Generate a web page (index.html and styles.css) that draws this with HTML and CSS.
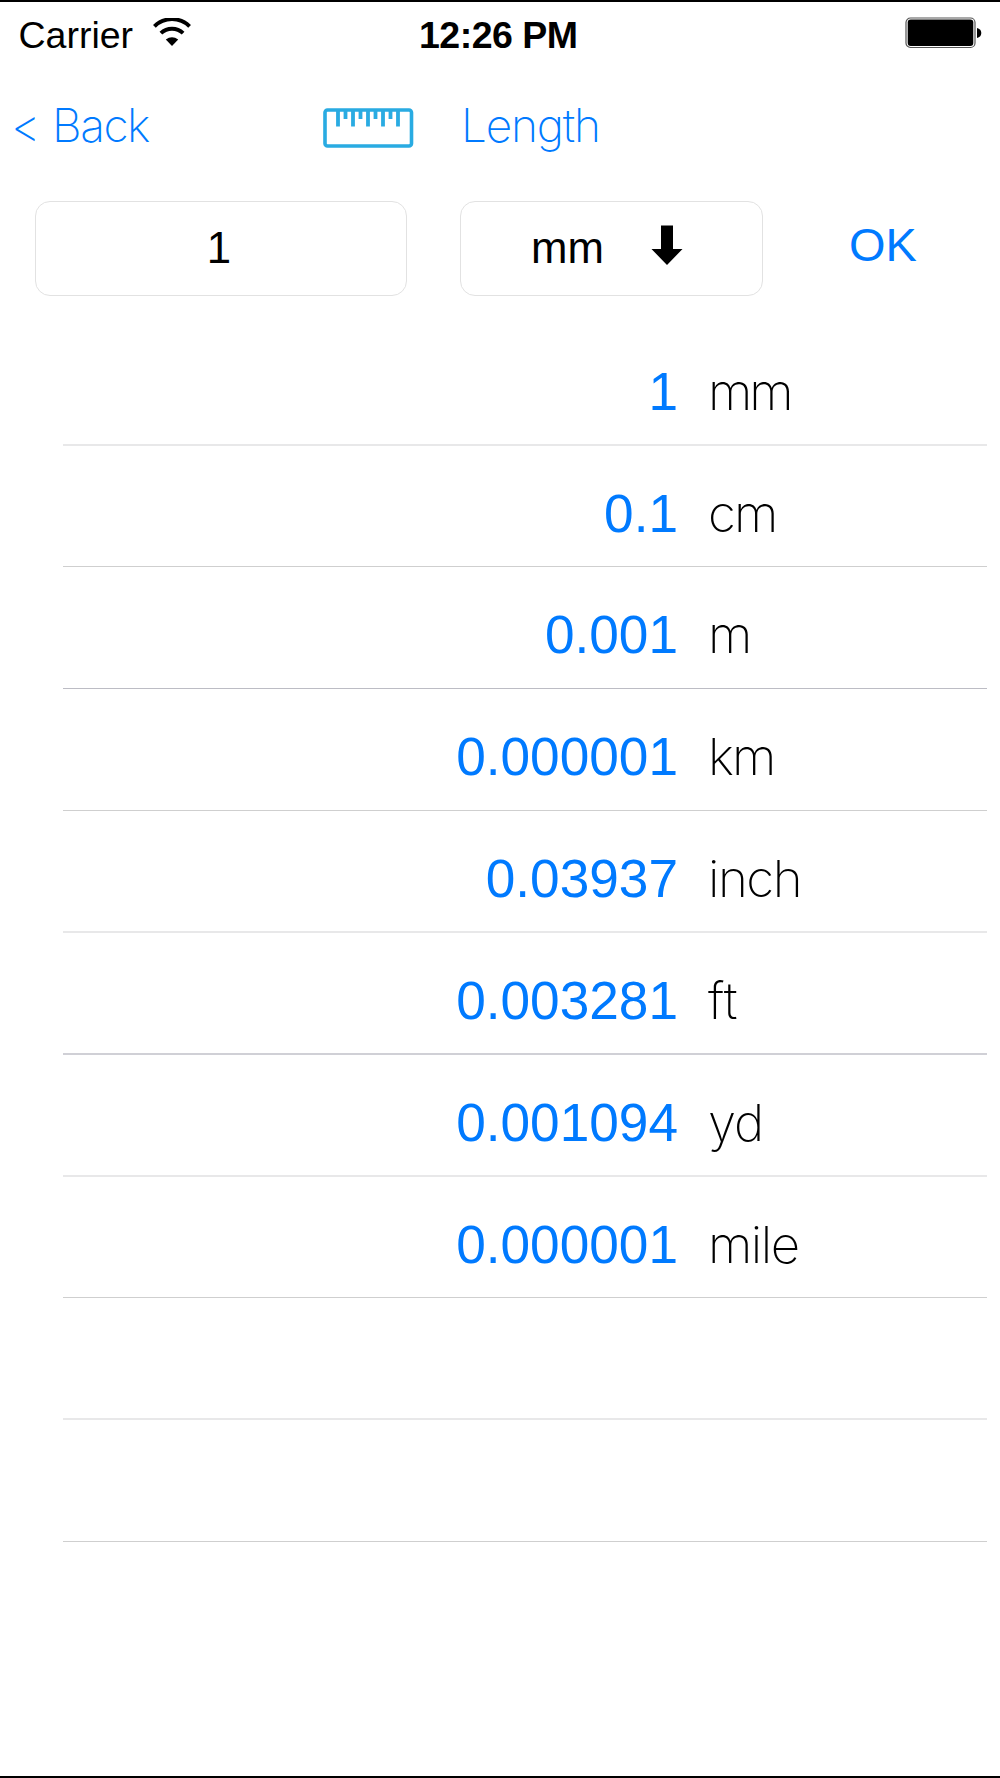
FILE: index.html
```html
<!DOCTYPE html>
<html lang="en">
<head>
<meta charset="utf-8">
<title>Length</title>
<link rel="stylesheet" href="styles.css">
</head>
<body>
<div class="screen">
  <header class="status">
    <div class="status-left">
      <span class="carrier">Carrier</span>
      <svg class="wifi" width="38" height="28" viewBox="0 0 38 28">
        <path d="M1.4 8.4A25 25 0 0 1 36.600 8.400" fill="none" stroke="#000" stroke-width="3.900"/>
        <path d="M7.900 15.200A16 16 0 0 1 30.100 15.200" fill="none" stroke="#000" stroke-width="3.900"/>
        <path d="M12.800 21.600Q19 16.900 25.200 21.600L19 28Z"/>
      </svg>
    </div>
    <span class="time">12:26 PM</span>
    <svg class="battery" width="78" height="32" viewBox="0 0 78 32">
      <rect x="1" y="1" width="69" height="29.500" rx="4.500" fill="#fff" stroke="#555" stroke-width="1.200"/>
      <rect x="2.700" y="2.600" width="65.600" height="26.300" rx="3" fill="#000"/>
      <path d="M72 11Q76.300 12 76.300 16T72 21Z"/>
    </svg>
  </header>
  <nav class="nav">
    <a class="back"><span class="chevron">&lt;</span><span class="back-text">Back</span></a>
    <svg class="ruler" width="91" height="40" viewBox="0 0 91 40" fill="none" stroke="#29abe2">
      <rect x="2" y="2" width="86.500" height="36" rx="2.500" stroke-width="3.600"/>
      <path d="M15 2V18.500M30 2V18.500M45 2V18.500M60 2V18.500M75 2V18.500M22.500 2V11M37.500 2V11M52.500 2V11M67.500 2V11" stroke-width="3.800"/>
    </svg>
    <span class="title">Length</span>
  </nav>
  <section class="entry">
    <div class="field amount">1</div>
    <div class="field unit-picker">
      <span>mm</span>
      <svg width="32" height="40" viewBox="0 0 32 40"><path d="M10 0.500H22V24H31.500L16 40L0.500 24H10Z"/></svg>
    </div>
    <span class="ok">OK</span>
  </section>
  <ul class="results">
    <li class="row faint"><span class="value">1</span><span class="unit u-mm">mm</span></li>
    <li class="row short"><span class="value">0.1</span><span class="unit u-cm">cm</span></li>
    <li class="row crisp"><span class="value">0.001</span><span class="unit">m</span></li>
    <li class="row"><span class="value">0.000001</span><span class="unit u-km">km</span></li>
    <li class="row faint"><span class="value">0.03937</span><span class="unit u-inch">inch</span></li>
    <li class="row strong"><span class="value">0.003281</span><span class="unit u-ft">ft</span></li>
    <li class="row faint"><span class="value">0.001094</span><span class="unit u-yd">yd</span></li>
    <li class="row short"><span class="value">0.000001</span><span class="unit u-mile">mile</span></li>
    <li class="row faint"></li>
    <li class="row"></li>
  </ul>
</div>
</body>
</html>
```
FILE: styles.css
```css
* { box-sizing: border-box; }
body {
  margin: 0;
  background: #fff;
  color: #000;
  font-family: "Liberation Sans", Arial, sans-serif;
}
.screen {
  height: 1778px;
  border-top: 2px solid #000;
  border-bottom: 2px solid #000;
  overflow: hidden;
}
.status {
  display: grid;
  grid-template-columns: 419px 1fr 78px;
  height: 66px;
  padding: 0 17px 0 0;
  font-size: 37.5px;
  line-height: 66px;
}
.status-left { display: flex; padding-left: 18.500px; }
.wifi { margin: 16px 0 0 20px; }
.time { font-weight: 700; letter-spacing: -0.500px; }
.battery { margin-top: 15px; }
.nav {
  display: flex;
  height: 114px;
  padding-top: 21px;
  font-family: Inter, "Liberation Sans", sans-serif;
  font-size: 46px;
  font-weight: 200;
  line-height: 72px;
  color: #007aff;
}
.back { display: flex; width: 323px; padding-left: 11px; }
.chevron { width: 41px; }
.back-text { letter-spacing: -1.500px; }
.ruler { margin-top: 19px; }
.title { margin-left: 47px; letter-spacing: -1.200px; }
.entry {
  display: flex;
  height: 142px;
  padding: 19px 0 0 35px;
  font-size: 43.75px;
}
.field {
  height: 95px;
  border: 1.500px solid #e2e2e2;
  border-radius: 15px;
  line-height: 91px;
}
.amount { width: 372px; text-align: center; padding-right: 4px; }
.unit-picker {
  display: flex;
  width: 303px;
  margin-left: 53px;
  padding-left: 70px;
}
.unit-picker svg { margin: 23px 0 0 47px; }
.ok {
  margin-left: 86px;
  color: #007aff;
  font-size: 46.900px;
  line-height: 88px;
}
.results { margin: 0; padding: 0; list-style: none; }
.row {
  display: grid;
  grid-template-columns: 615px 1fr;
  column-gap: 30px;
  height: 122px;
  margin: 0 13px 0 63px;
  padding-top: 14px;
  font-size: 53.200px;
  line-height: 107px;
  box-shadow: inset 0 -1px #cfcfcf;
}
.short { height: 121px; }
.faint { box-shadow: inset 0 -2px #e8e8e9; }
.strong { box-shadow: inset 0 -2px #d0d0d6; }
.crisp { box-shadow: inset 0 -1px #bcbcc4; }
.value { color: #007aff; text-align: right; }
.unit {
  font-family: Inter, "Liberation Sans", sans-serif;
  font-size: 51px;
  font-weight: 200;
}
.u-mm { letter-spacing: -3px; }
.u-cm { letter-spacing: -2px; }
.u-km { letter-spacing: -2px; }
.u-inch { letter-spacing: -1.500px; }
.u-yd { letter-spacing: -1px; }
.u-mile { letter-spacing: -1.500px; }
```
